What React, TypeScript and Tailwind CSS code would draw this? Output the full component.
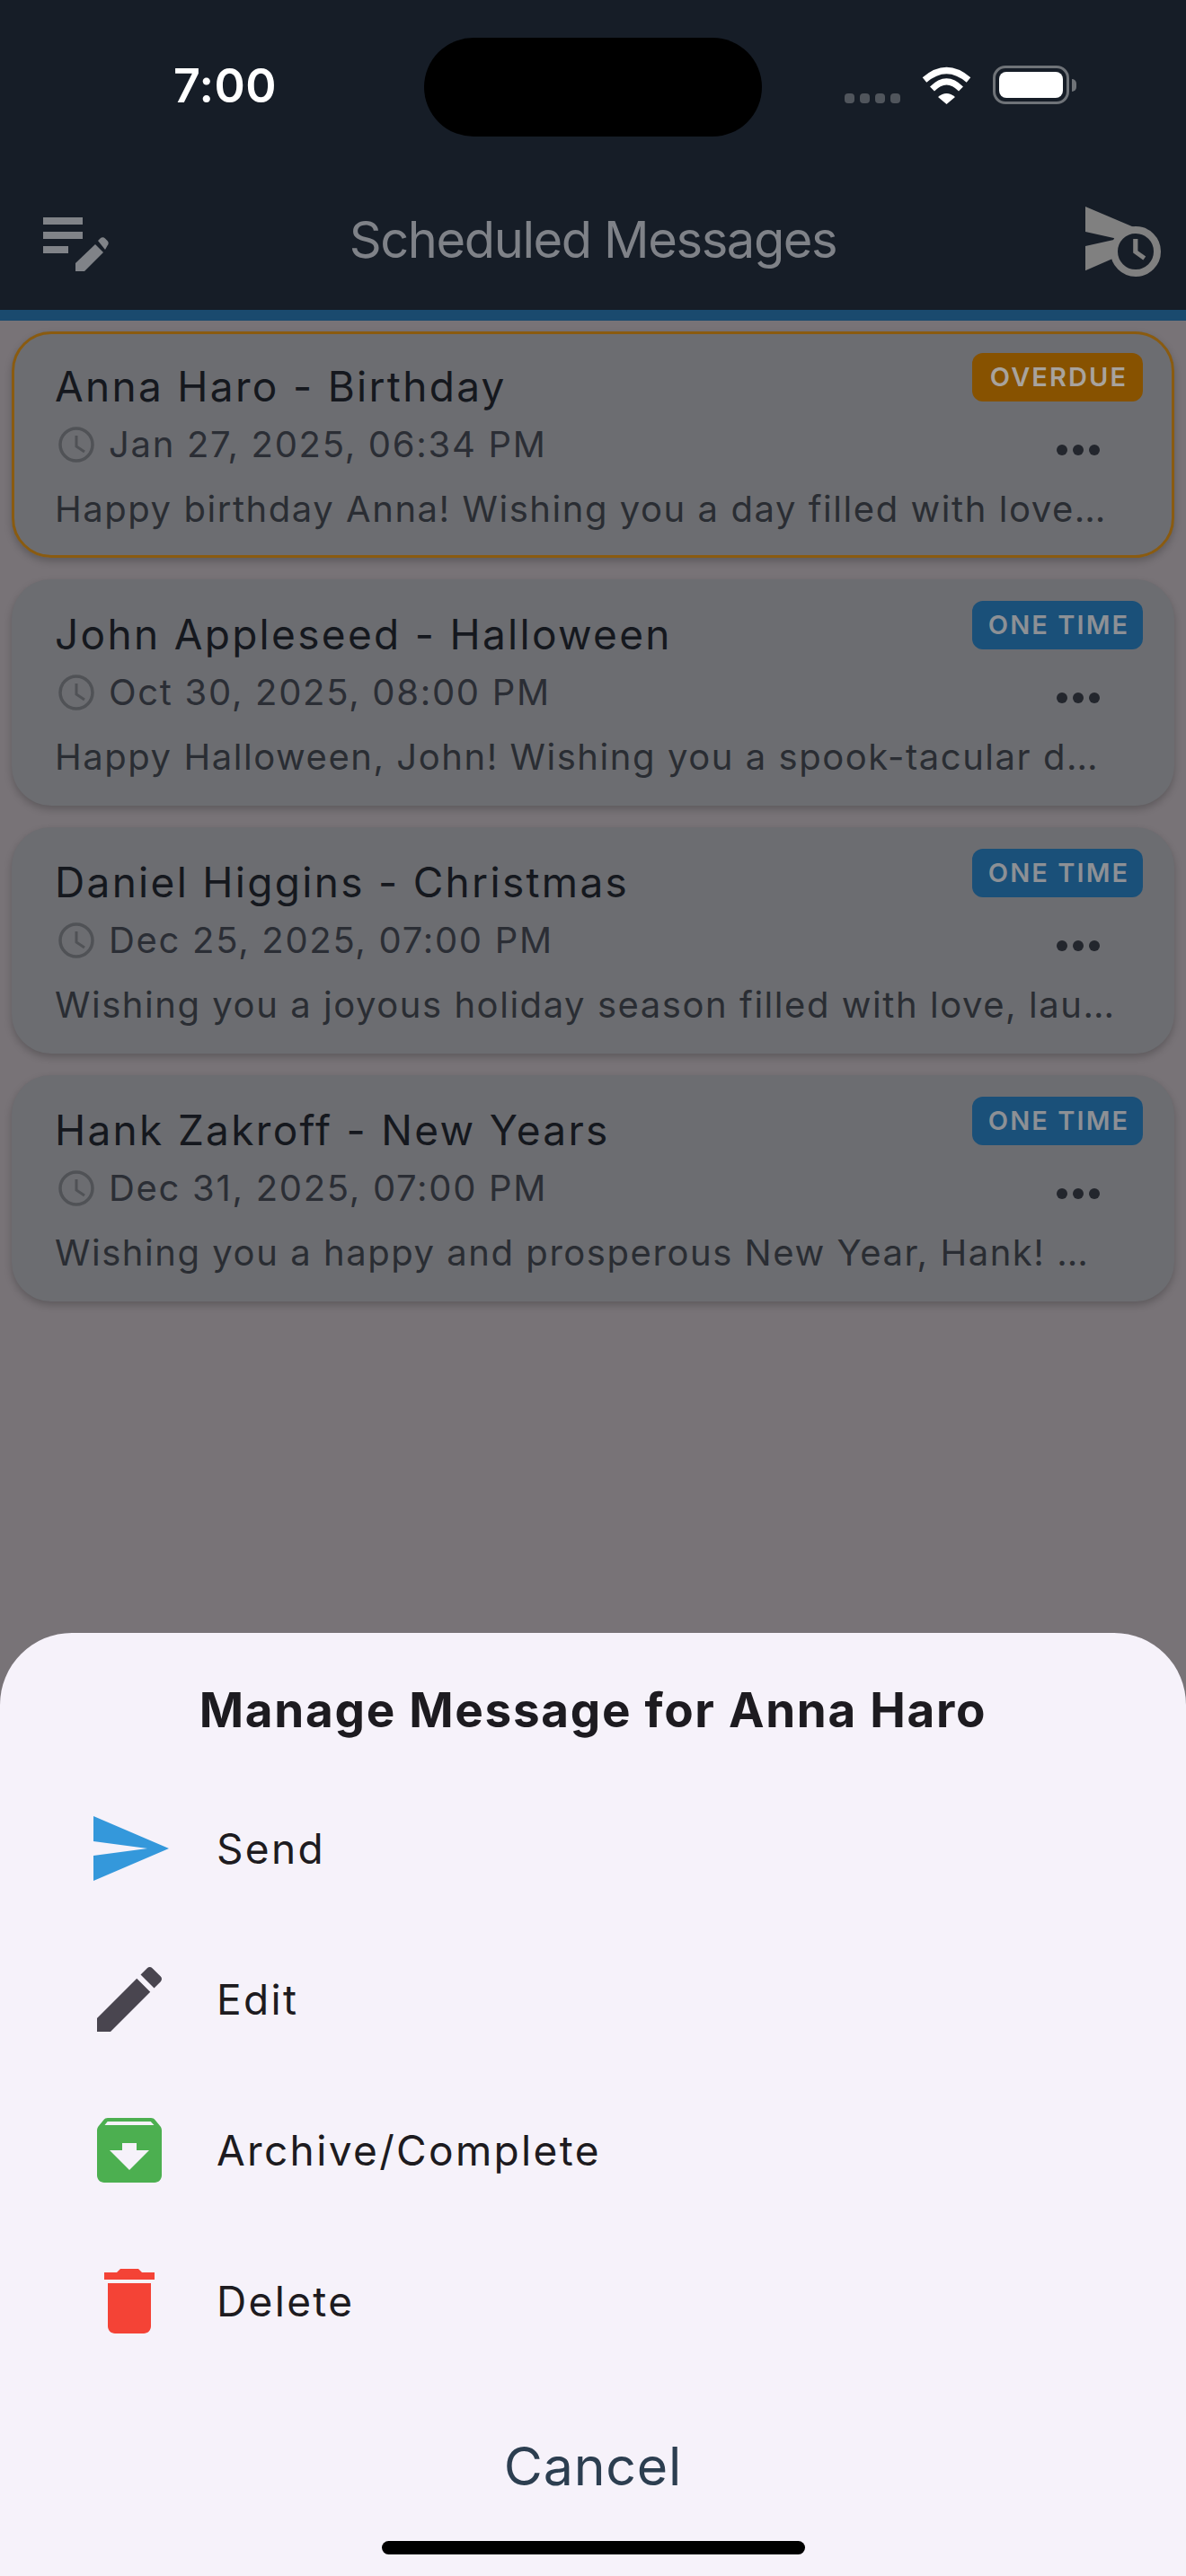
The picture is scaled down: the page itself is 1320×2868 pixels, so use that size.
const cards = [
  { title: "Anna Haro - Birthday", date: "Jan 27, 2025, 06:34 PM", body: "Happy birthday Anna! Wishing you a day filled with love…", badge: "OVERDUE", overdue: true },
  { title: "John Appleseed - Halloween", date: "Oct 30, 2025, 08:00 PM", body: "Happy Halloween, John! Wishing you a spook-tacular d…", badge: "ONE TIME", overdue: false },
  { title: "Daniel Higgins - Christmas", date: "Dec 25, 2025, 07:00 PM", body: "Wishing you a joyous holiday season filled with love, lau…", badge: "ONE TIME", overdue: false },
  { title: "Hank Zakroff - New Years", date: "Dec 31, 2025, 07:00 PM", body: "Wishing you a happy and prosperous New Year, Hank! …", badge: "ONE TIME", overdue: false },
];

function Wifi() {
  return (
    <svg width="57" height="42" viewBox="0 0 57 42" fill="none">
      <path d="M4 15Q28.5-6 53 15" stroke="#fff" strokeWidth="7" />
      <path d="M12.5 25Q28.5 9 44.5 25" stroke="#fff" strokeWidth="7" />
      <path d="M19 34Q28.5 26 38 34L28.5 42Z" fill="#fff" />
    </svg>
  );
}

function Battery() {
  return (
    <div className="flex items-center">
      <div className="w-[85px] h-[43px] rounded-[14px] border-[3px] border-[#6f7378] p-[4px]">
        <div className="w-full h-full rounded-[8px] bg-white" />
      </div>
      <div className="w-[5px] h-[14px] ml-[3px] rounded-r-[5px] bg-[#6f7378]" />
    </div>
  );
}

function EditNote() {
  return (
    <svg width="96" height="96" viewBox="0 0 96 96" fill="#808388">
      <path d="M12 24h44v8H12zM12 40h44v8H12zM12 56h28v8H12z" />
      <path d="M48 75l22-21 9 9-21 21H48z" />
      <path d="M73 50l2.5-2.5c1.6-1.6 4-1.6 5.5 0l2.5 2.5c1.6 1.6 1.6 4 0 5.5L81 60z" />
    </svg>
  );
}

function ScheduleSend() {
  return (
    <svg width="96" height="96" viewBox="0 0 24 24" fill="#808080">
      <path d="M2 3l15 6.4V15l-7 2.3-8 3.5V14l9-2-9-2z" />
      <circle cx="16" cy="15.5" r="6" fill="#161d27" stroke="#808080" strokeWidth="2" />
      <path d="M15.3 12h1.3v3.3l2.2 1.6-.7 1-2.8-2z" />
    </svg>
  );
}

function ClockIcon() {
  return (
    <svg width="48" height="48" viewBox="0 0 48 48" fill="none" stroke="#505256" strokeWidth="3.5" className="shrink-0">
      <circle cx="24" cy="24" r="18" />
      <path d="M24 14v12l9 6" strokeWidth="3" />
    </svg>
  );
}

function Card({ c }: { c: (typeof cards)[number] }) {
  return (
    <div
      className={`relative h-[252px] rounded-[44px] bg-[#6c6d71] shadow-[0_4px_8px_rgba(0,0,0,0.22)] pl-[48px] pt-[33px] ${
        c.overdue ? "outline-[3px] -outline-offset-[3px] outline-[#8a5b10]" : ""
      }`}
    >
      <div className="text-[46px] leading-[56px] tracking-[2.3px] text-[#15181e] whitespace-nowrap">{c.title}</div>
      <div className="flex items-center mt-[11px] h-[52px]">
        <ClockIcon />
        <span className="ml-[12px] text-[40px] leading-[52px] tracking-[1.7px] text-[#2b2e35] whitespace-nowrap">{c.date}</span>
      </div>
      <div className="mt-[20px] text-[40px] leading-[52px] tracking-[1.55px] text-[#2a2d33] whitespace-nowrap">{c.body}</div>
      <div
        className={`absolute top-[24px] right-[35px] w-[190px] h-[54px] rounded-[12px] flex items-center justify-center pl-[3px] text-[29px] font-semibold tracking-[2.1px] ${
          c.overdue ? "bg-[#875200] text-[#a8a39d]" : "bg-[#1a5079] text-[#8d9095]"
        }`}
      >
        {c.badge}
      </div>
      <div className="absolute top-[126px] right-[83px] flex gap-[6px]">
        <span className="w-[12px] h-[12px] rounded-full bg-[#23262d]" />
        <span className="w-[12px] h-[12px] rounded-full bg-[#23262d]" />
        <span className="w-[12px] h-[12px] rounded-full bg-[#23262d]" />
      </div>
    </div>
  );
}

const rows = [
  { label: "Send", fill: "#3498db", d: "M2.01 21L23 12 2.01 3 2 10l15 2-15 2z" },
  { label: "Edit", fill: "#49454f", d: "M3 17.25V21h3.75L17.81 9.94l-3.75-3.75L3 17.25zM20.71 7.04c.39-.39.39-1.02 0-1.41l-2.34-2.34c-.39-.39-1.02-.39-1.41 0l-1.83 1.83 3.75 3.75 1.83-1.83z" },
  { label: "Archive/Complete", fill: "#4caf50", d: "M20.54 5.23l-1.39-1.68C18.88 3.21 18.47 3 18 3H6c-.47 0-.88.21-1.16.55L3.46 5.23C3.17 5.57 3 6.02 3 6.5V19c0 1.1.9 2 2 2h14c1.1 0 2-.9 2-2V6.5c0-.48-.17-.93-.46-1.27zM12 17.5L6.5 12H10v-2h4v2h3.5L12 17.5zM5.12 5l.81-1h12l.94 1H5.12z" },
  { label: "Delete", fill: "#f44336", d: "M6 19c0 1.1.9 2 2 2h8c1.1 0 2-.9 2-2V7H6v12zM19 4h-3.5l-1-1h-5l-1 1H5v2h14V4z" },
];

export default function App() {
  return (
    <div
      className="relative w-[1320px] h-[2868px] overflow-hidden bg-[#787377] flex flex-col"
      style={{ fontFamily: "Inter, 'Noto Sans', sans-serif" }}
    >
      <header className="h-[345px] bg-[#161d27] flex flex-col shrink-0">
        <div className="h-[218px] relative">
          <div className="flex items-start justify-between pl-[193px] pr-[122px] pt-[73px]">
            <span className="text-[52px] leading-[46px] font-semibold tracking-[0.4px] text-white">7:00</span>
            <div className="flex items-end">
              <div className="flex gap-[6px] mb-[1px] mr-[23px]">
                <span className="w-[11px] h-[11px] rounded-[4px] bg-[#50555c]" />
                <span className="w-[11px] h-[11px] rounded-[4px] bg-[#50555c]" />
                <span className="w-[11px] h-[11px] rounded-[4px] bg-[#50555c]" />
                <span className="w-[11px] h-[11px] rounded-[4px] bg-[#50555c]" />
              </div>
              <Wifi />
              <div className="ml-[23px]"><Battery /></div>
            </div>
          </div>
          <div className="absolute left-[472px] top-[42px] w-[376px] h-[110px] rounded-[55px] bg-black" />
        </div>
        <div className="grid grid-cols-[1fr_auto_1fr] items-center px-[24px]">
          <div className="ml-[12px]"><EditNote /></div>
          <div className="pt-[2px] text-[56px] leading-[72px] tracking-[-1.4px] text-[#7f8288] text-center whitespace-nowrap">Scheduled Messages</div>
          <div className="justify-self-end"><ScheduleSend /></div>
        </div>
      </header>
      <div className="h-[12px] bg-[#1a4a6e] shrink-0" />

      <main className="flex flex-col gap-[24px] px-[13px] pt-[12px]">
        {cards.map((c) => (
          <Card key={c.title} c={c} />
        ))}
      </main>

      <section className="absolute inset-x-0 bottom-0 h-[1050px] rounded-t-[80px] bg-[#f6f2fa] flex flex-col">
        <h2 className="mt-[54px] text-center text-[53px] leading-[64px] font-bold tracking-[1.7px] text-[#1d1b20]">
          Manage Message for Anna Haro
        </h2>
        <div className="mt-[38px] flex flex-col">
          {rows.map((r) => (
            <div key={r.label} className="h-[168px] flex items-center pl-[96px]">
              <svg width="96" height="96" viewBox="0 0 24 24" fill={r.fill} className="shrink-0">
                <path d={r.d} />
              </svg>
              <span className="ml-[49px] text-[46px] leading-[60px] tracking-[2.35px] text-[#1d1b20]">{r.label}</span>
            </div>
          ))}
        </div>
        <div className="mt-[64px] text-center text-[59px] leading-[72px] tracking-[0.8px] text-[#2c3e50]">Cancel</div>
        <div className="mt-[47px] mx-auto w-[471px] h-[15px] rounded-full bg-black" />
      </section>
    </div>
  );
}
